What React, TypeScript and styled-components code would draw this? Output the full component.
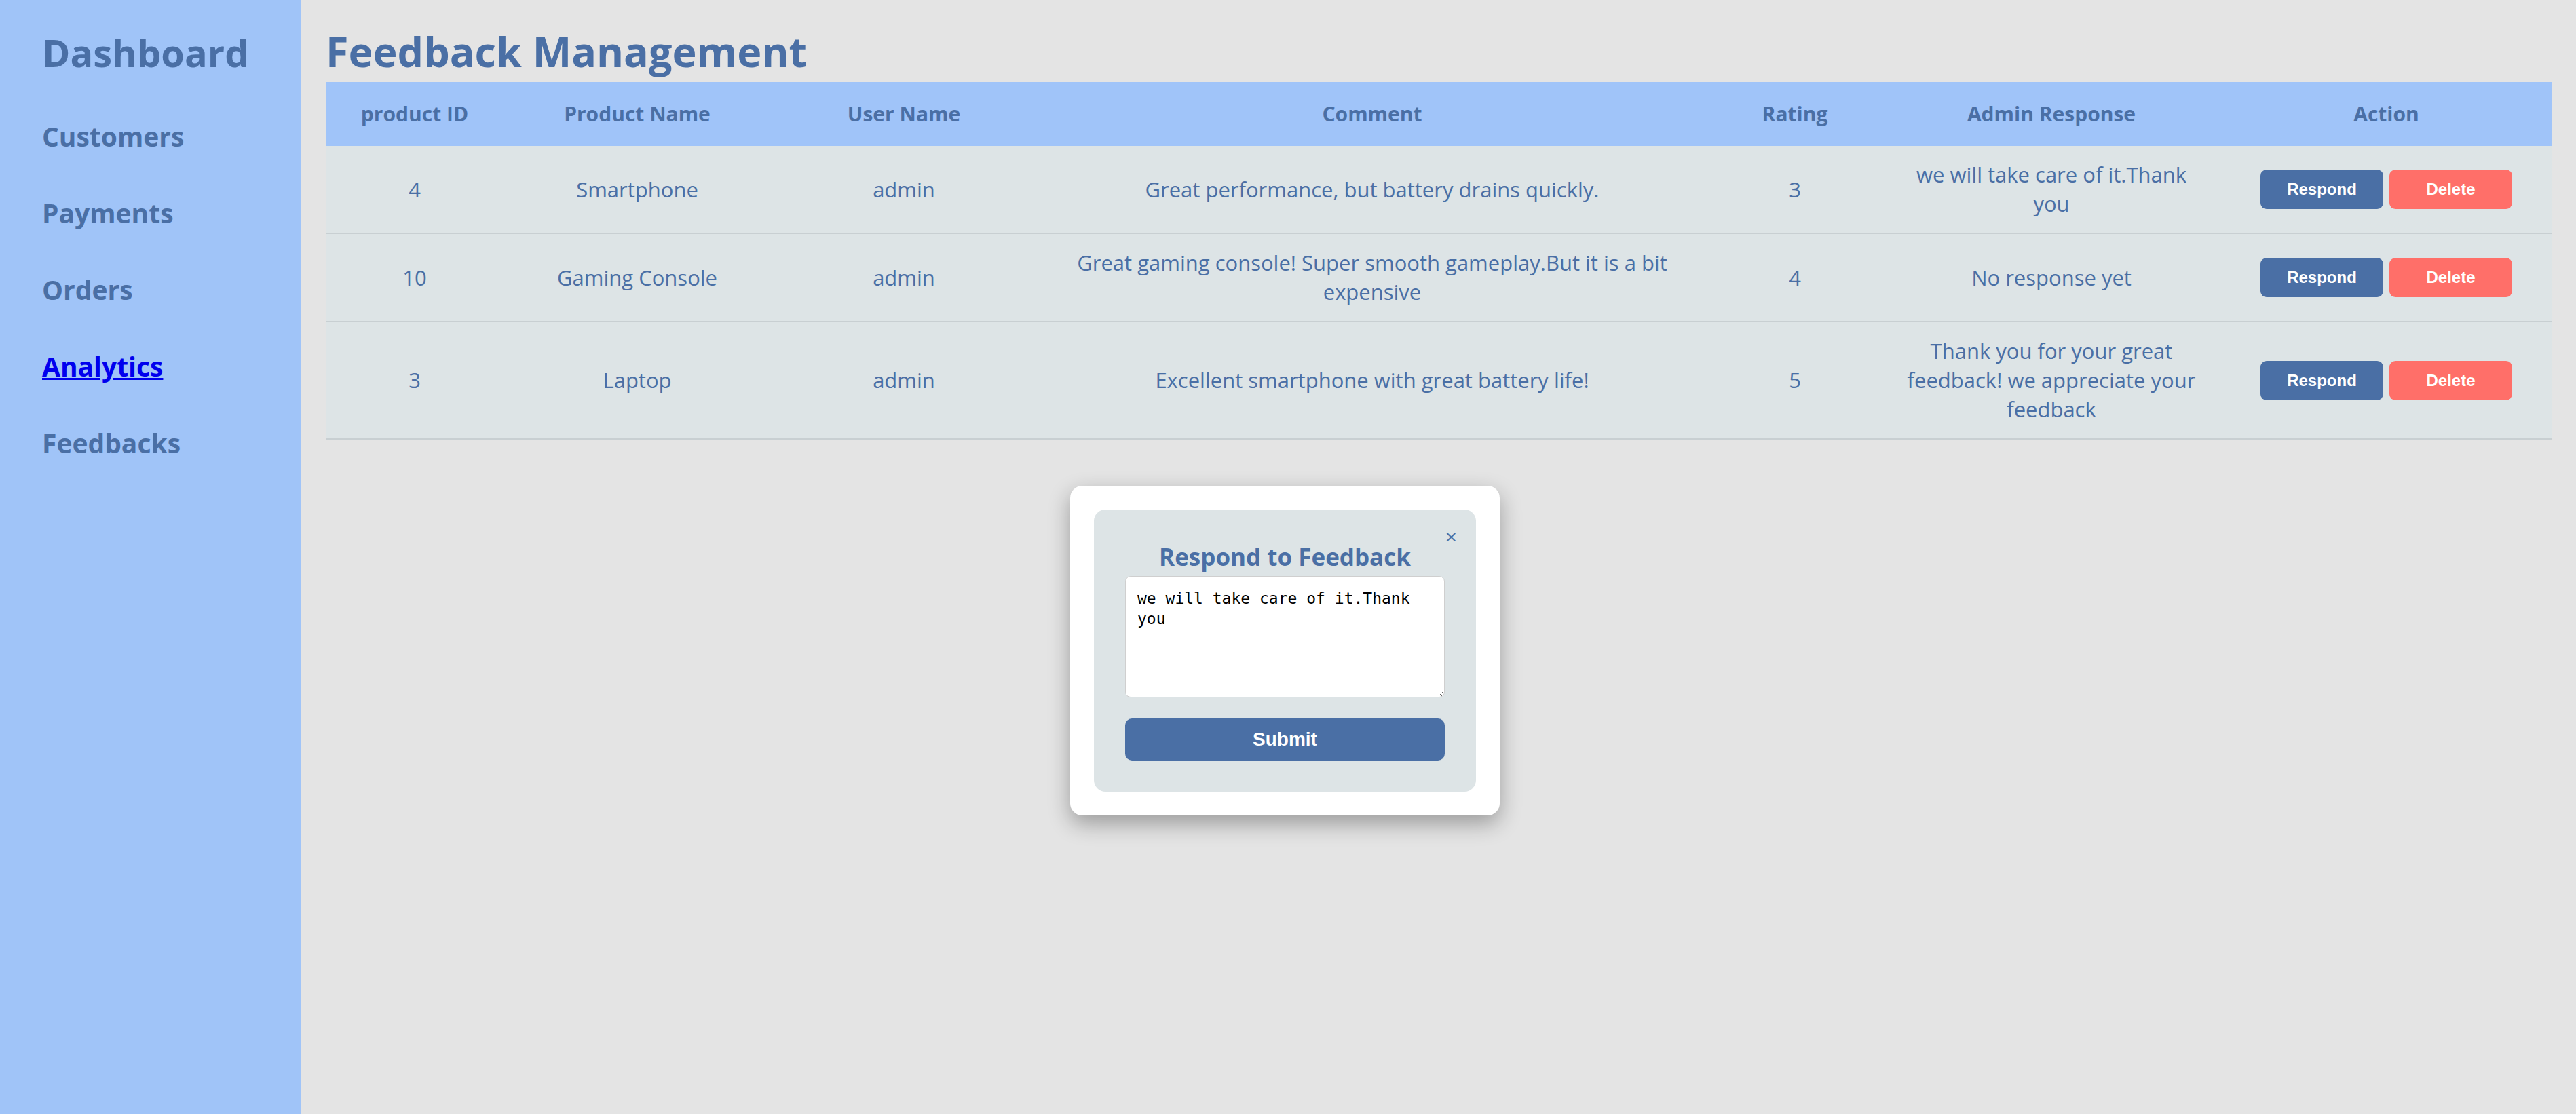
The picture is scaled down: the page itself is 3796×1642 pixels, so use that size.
import styled, { createGlobalStyle } from "styled-components";

const GlobalStyle = createGlobalStyle`
  body {
    margin: 0;
    background: #e4e4e4;
    font-family: "Open Sans", "Noto Sans", sans-serif;
    color: #4a6fa5;
  }
  * {
    box-sizing: border-box;
  }
`;

const Layout = styled.div`
  display: flex;
  min-height: 100vh;
`;

const Sidebar = styled.aside`
  width: 444px;
  flex-shrink: 0;
  background: #a0c4f8;
  padding: 40px 0 0 62px;
  display: flex;
  flex-direction: column;
  gap: 61px;
`;

const Brand = styled.h2`
  margin: 0;
  font-size: 56px;
  line-height: 74px;
  font-weight: 700;
  color: #4a6fa5;
`;

const NavLink = styled.a<{ $active?: boolean }>`
  font-size: 39px;
  line-height: 52px;
  font-weight: 700;
  color: ${(p) => (p.$active ? "#0000ee" : "#4a6fa5")};
  text-decoration: ${(p) => (p.$active ? "underline" : "none")};
`;

const Main = styled.main`
  flex: 1;
  padding: 35px 35px 0 36px;
`;

const Title = styled.h1`
  margin: 0 0 4px;
  font-size: 61px;
  line-height: 82px;
  font-weight: 700;
  color: #4a6fa5;
`;

const Table = styled.table`
  width: 100%;
  table-layout: fixed;
  border-collapse: collapse;
  background: #dde4e6;
`;

const Th = styled.th`
  background: #a0c4f9;
  padding: 26px 20px;
  font-size: 30px;
  line-height: 42px;
  font-weight: 700;
  text-align: center;
  color: #4a6fa5;
`;

const Td = styled.td<{ $pad?: number }>`
  padding: 21px ${(p) => p.$pad ?? 26}px;
  font-size: 31px;
  line-height: 43px;
  text-align: center;
  vertical-align: middle;
  border-bottom: 2px solid #c8cfd2;
  color: #4a6fa5;
`;

const ActionCell = styled.div`
  display: flex;
  justify-content: center;
  gap: 9px;
`;

const RowButton = styled.button<{ $danger?: boolean }>`
  width: 181px;
  height: 58px;
  border: none;
  border-radius: 9px;
  background: ${(p) => (p.$danger ? "#ff6f69" : "#4a6fa5")};
  color: #fff;
  font-family: "Liberation Sans", Arial, sans-serif;
  font-size: 24px;
  font-weight: 700;
  cursor: pointer;
`;

const Modal = styled.div`
  position: fixed;
  left: 1577px;
  top: 716px;
  width: 633px;
  padding: 35px;
  background: #fff;
  border-radius: 18px;
  box-shadow: 0 12px 32px rgba(0, 0, 0, 0.32);
`;

const ModalBody = styled.div`
  position: relative;
  background: #dde4e6;
  border-radius: 17px;
  padding: 46px;
`;

const CloseButton = styled.span`
  position: absolute;
  top: 25px;
  right: 28px;
  font-size: 30px;
  line-height: 30px;
  color: #4a6fa5;
  cursor: pointer;
`;

const ModalTitle = styled.h3`
  margin: 0 0 4px;
  font-size: 35px;
  line-height: 48px;
  font-weight: 700;
  text-align: center;
  color: #4a6fa5;
`;

const ResponseInput = styled.textarea`
  display: block;
  width: 100%;
  height: 179px;
  padding: 17px;
  border: 1px solid #cfcfcf;
  border-radius: 8px;
  background: #fff;
  font-family: "DejaVu Sans Mono", monospace;
  font-size: 23px;
  line-height: 30px;
  color: #000;
`;

const SubmitButton = styled.button`
  display: block;
  width: 100%;
  height: 62px;
  margin-top: 31px;
  border: none;
  border-radius: 10px;
  background: #4a6fa5;
  color: #fff;
  font-family: "Liberation Sans", Arial, sans-serif;
  font-size: 28px;
  font-weight: 700;
  cursor: pointer;
`;

const columns = [
  { label: "product ID", width: 262 },
  { label: "Product Name", width: 394 },
  { label: "User Name", width: 392 },
  { label: "Comment", width: 988 },
  { label: "Rating", width: 258 },
  { label: "Admin Response", width: 498 },
  { label: "Action", width: 489 },
];

const feedbacks = [
  {
    id: 4,
    product: "Smartphone",
    user: "admin",
    comment: "Great performance, but battery drains quickly.",
    rating: 3,
    response: "we will take care of it.Thank you",
  },
  {
    id: 10,
    product: "Gaming Console",
    user: "admin",
    comment: "Great gaming console! Super smooth gameplay.But it is a bit expensive",
    rating: 4,
    response: "No response yet",
  },
  {
    id: 3,
    product: "Laptop",
    user: "admin",
    comment: "Excellent smartphone with great battery life!",
    rating: 5,
    response: "Thank you for your great feedback! we appreciate your feedback",
  },
];

const navItems = ["Customers", "Payments", "Orders", "Analytics", "Feedbacks"];

const App = () => {
  return (
    <Layout>
      <GlobalStyle />
      <Sidebar>
        <Brand>Dashboard</Brand>
        {navItems.map((item) => (
          <NavLink key={item} href="#" $active={item === "Analytics"}>
            {item}
          </NavLink>
        ))}
      </Sidebar>
      <Main>
        <Title>Feedback Management</Title>
        <Table>
          <colgroup>
            {columns.map((c) => (
              <col key={c.label} style={{ width: c.width }} />
            ))}
          </colgroup>
          <thead>
            <tr>
              {columns.map((c) => (
                <Th key={c.label}>{c.label}</Th>
              ))}
            </tr>
          </thead>
          <tbody>
            {feedbacks.map((f) => (
              <tr key={f.id}>
                <Td>{f.id}</Td>
                <Td>{f.product}</Td>
                <Td>{f.user}</Td>
                <Td>{f.comment}</Td>
                <Td>{f.rating}</Td>
                <Td $pad={30}>{f.response}</Td>
                <Td>
                  <ActionCell>
                    <RowButton>Respond</RowButton>
                    <RowButton $danger>Delete</RowButton>
                  </ActionCell>
                </Td>
              </tr>
            ))}
          </tbody>
        </Table>
      </Main>
      <Modal>
        <ModalBody>
          <CloseButton>×</CloseButton>
          <ModalTitle>Respond to Feedback</ModalTitle>
          <ResponseInput defaultValue="we will take care of it.Thank you" />
          <SubmitButton>Submit</SubmitButton>
        </ModalBody>
      </Modal>
    </Layout>
  );
};

export default App;
